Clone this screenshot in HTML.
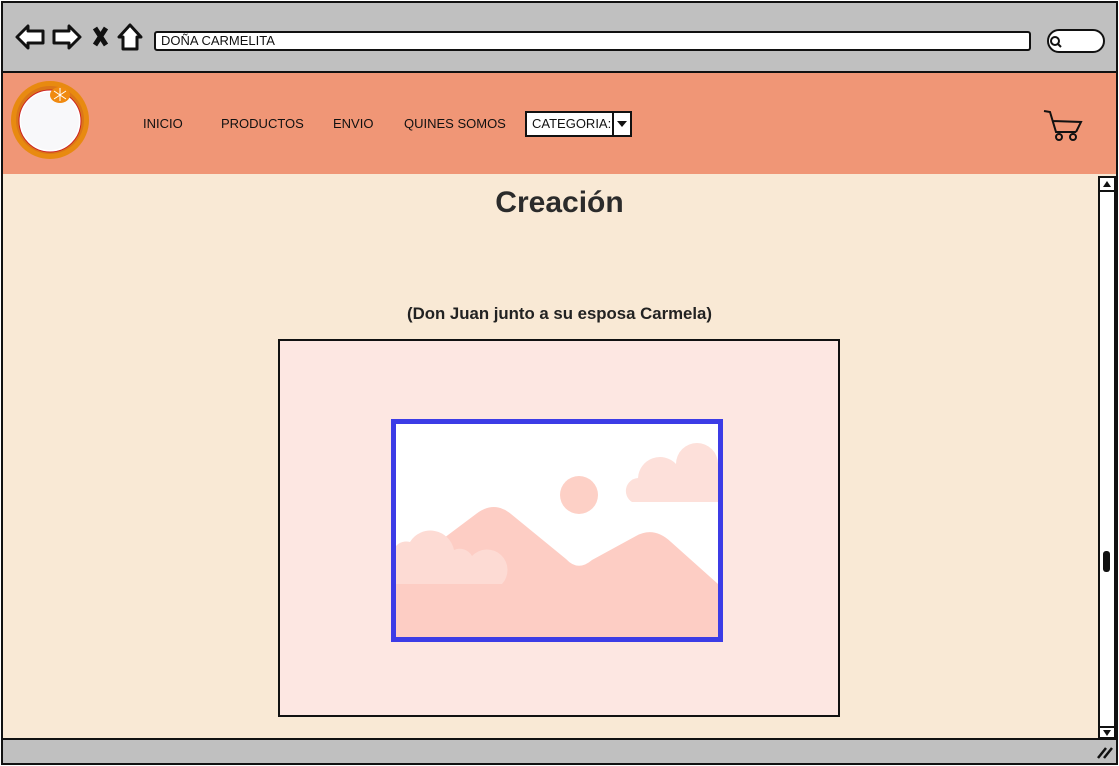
<!DOCTYPE html>
<html><head><meta charset="utf-8"><style>
*{margin:0;padding:0;box-sizing:border-box}
body{width:1119px;height:766px;position:relative;overflow:hidden;background:#fff;font-family:"Liberation Sans",sans-serif}
.a{position:absolute}
.n{position:absolute;top:116px;font-size:13px;color:#111;line-height:16px}
</style></head><body>
<div class="a" style="left:1px;top:1px;width:1117px;height:764px;border:2px solid #111;background:#c0c0c0"></div>
<div class="a" style="left:3px;top:71px;width:1113px;height:2px;background:#111"></div>
<div class="a" style="left:3px;top:73px;width:1113px;height:101px;background:#f09676"></div>
<div class="a" style="left:3px;top:174px;width:1113px;height:564px;background:#f9e9d5"></div>
<div class="a" style="left:3px;top:738px;width:1113px;height:2px;background:#111"></div>
<svg class="a" style="left:14px;top:22px" width="130" height="30" viewBox="0 0 130 30">
<path d="M3 15 L14 4 L14 9 L29 9 L29 21 L14 21 L14 26 Z" fill="#fff" stroke="#111" stroke-width="3" stroke-linejoin="round"/>
<path d="M66 15 L55 4 L55 9 L40 9 L40 21 L55 21 L55 26 Z" fill="#fff" stroke="#111" stroke-width="3" stroke-linejoin="round"/>
<path d="M81 6 L92 23 M92 6 L81 23" stroke="#111" stroke-width="5"/>
<path d="M116 3 L105 15 L109 15 L109 27 L123 27 L123 15 L127 15 Z" fill="#fff" stroke="#111" stroke-width="3" stroke-linejoin="round"/>
</svg>
<div class="a" style="left:154px;top:31px;width:877px;height:20px;border:2.5px solid #111;border-radius:3px;background:#fff;font-size:13px;line-height:15px;padding-left:5px;color:#111">DOÑA CARMELITA</div>
<div class="a" style="left:1047px;top:29px;width:58px;height:24px;border:2.5px solid #111;border-radius:12px;background:#fff"></div>
<svg class="a" style="left:1049px;top:35px" width="14" height="14"><circle cx="6" cy="6" r="4" fill="none" stroke="#111" stroke-width="2"/><path d="M9 9 L12 12" stroke="#111" stroke-width="2"/></svg>
<svg class="a" style="left:9px;top:79px" width="84" height="82" viewBox="0 0 84 82">
<circle cx="41" cy="41" r="39" fill="#e88a10"/>
<circle cx="41" cy="41" r="34" fill="#d2691e" opacity=".6"/>
<circle cx="41" cy="42" r="31" fill="#fff" stroke="#cc2222" stroke-width="1"/>
<circle cx="41" cy="42" r="29" fill="#f8f8fa"/>
<ellipse cx="51" cy="16" rx="10" ry="8" fill="#f08a10"/>
<path d="M51 9 L51 22 M45 12 L57 20 M57 12 L45 20" stroke="#fff" stroke-width="1"/>
</svg>
<div class="n" style="left:143px">INICIO</div>
<div class="n" style="left:221px">PRODUCTOS</div>
<div class="n" style="left:333px">ENVIO</div>
<div class="n" style="left:404px">QUINES SOMOS</div>
<div class="a" style="left:525px;top:111px;width:107px;height:26px;border:2px solid #111;background:#fff;font-size:13px;line-height:22px;padding-left:5px;color:#111">CATEGORIA:</div>
<div class="a" style="left:612px;top:111px;width:2px;height:26px;background:#111"></div>
<div class="a" style="left:617px;top:121px;width:0;height:0;border-left:5px solid transparent;border-right:5px solid transparent;border-top:6px solid #111"></div>
<svg class="a" style="left:1042px;top:108px" width="42" height="34" viewBox="0 0 42 34">
<path d="M2 3 L8 4 L14 24 L34 24 M11 13 L39 14 L34 24" fill="none" stroke="#111" stroke-width="2"/>
<circle cx="17" cy="29" r="3" fill="none" stroke="#111" stroke-width="2"/><circle cx="31" cy="29" r="3" fill="none" stroke="#111" stroke-width="2"/>
</svg>
<div class="a" style="left:0;width:1119px;top:186px;text-align:center;font-size:30px;font-weight:bold;color:#2b2b2b;line-height:34px">Creación</div>
<div class="a" style="left:0;width:1119px;top:304px;text-align:center;font-size:16.8px;font-weight:bold;color:#222;line-height:19px">(Don Juan junto a su esposa Carmela)</div>
<div class="a" style="left:278px;top:339px;width:562px;height:378px;border:2px solid #111;background:#fde7e2"></div>
<div class="a" style="left:391px;top:419px;width:332px;height:223px;border:5px solid #3c3ce6;background:#fff;overflow:hidden">
<svg width="322" height="213" viewBox="0 0 322 213">
<circle cx="183" cy="71" r="19" fill="#fdd0c6"/>
<path d="M236 78 a13 13 0 0 1 6-24 a22 22 0 0 1 38-14 a20 20 0 0 1 42 0 V78 Z" fill="#fde0da"/>
<path d="M0 150 L80 90 Q98 76 115 90 L170 135 Q182 148 196 136 L240 112 Q258 102 275 118 L322 160 V213 H0 Z" fill="#fdcdc4"/>
<path d="M0 160 V122 a14 14 0 0 1 14-4 a24 24 0 0 1 44 8 a14 14 0 0 1 18 6 a16 16 0 0 1 30 28 Z" fill="#fddbd4"/>
</svg></div>
<div class="a" style="left:1098px;top:176px;width:18px;height:563px;border:2.5px solid #111;background:#fff"></div>
<div class="a" style="left:1103px;top:181px;border-left:4px solid transparent;border-right:4px solid transparent;border-bottom:6px solid #111"></div>
<div class="a" style="left:1100px;top:190px;width:14px;height:2px;background:#111"></div>
<div class="a" style="left:1100px;top:726px;width:14px;height:2px;background:#111"></div>
<div class="a" style="left:1103px;top:730px;border-left:4px solid transparent;border-right:4px solid transparent;border-top:6px solid #111"></div>
<div class="a" style="left:1103px;top:551px;width:7px;height:21px;background:#111;border-radius:3px"></div>
<svg class="a" style="left:1096px;top:744px" width="18" height="16"><path d="M2 14 L10 4 M8 14 L16 4" stroke="#111" stroke-width="2.5"/></svg>
</body></html>
